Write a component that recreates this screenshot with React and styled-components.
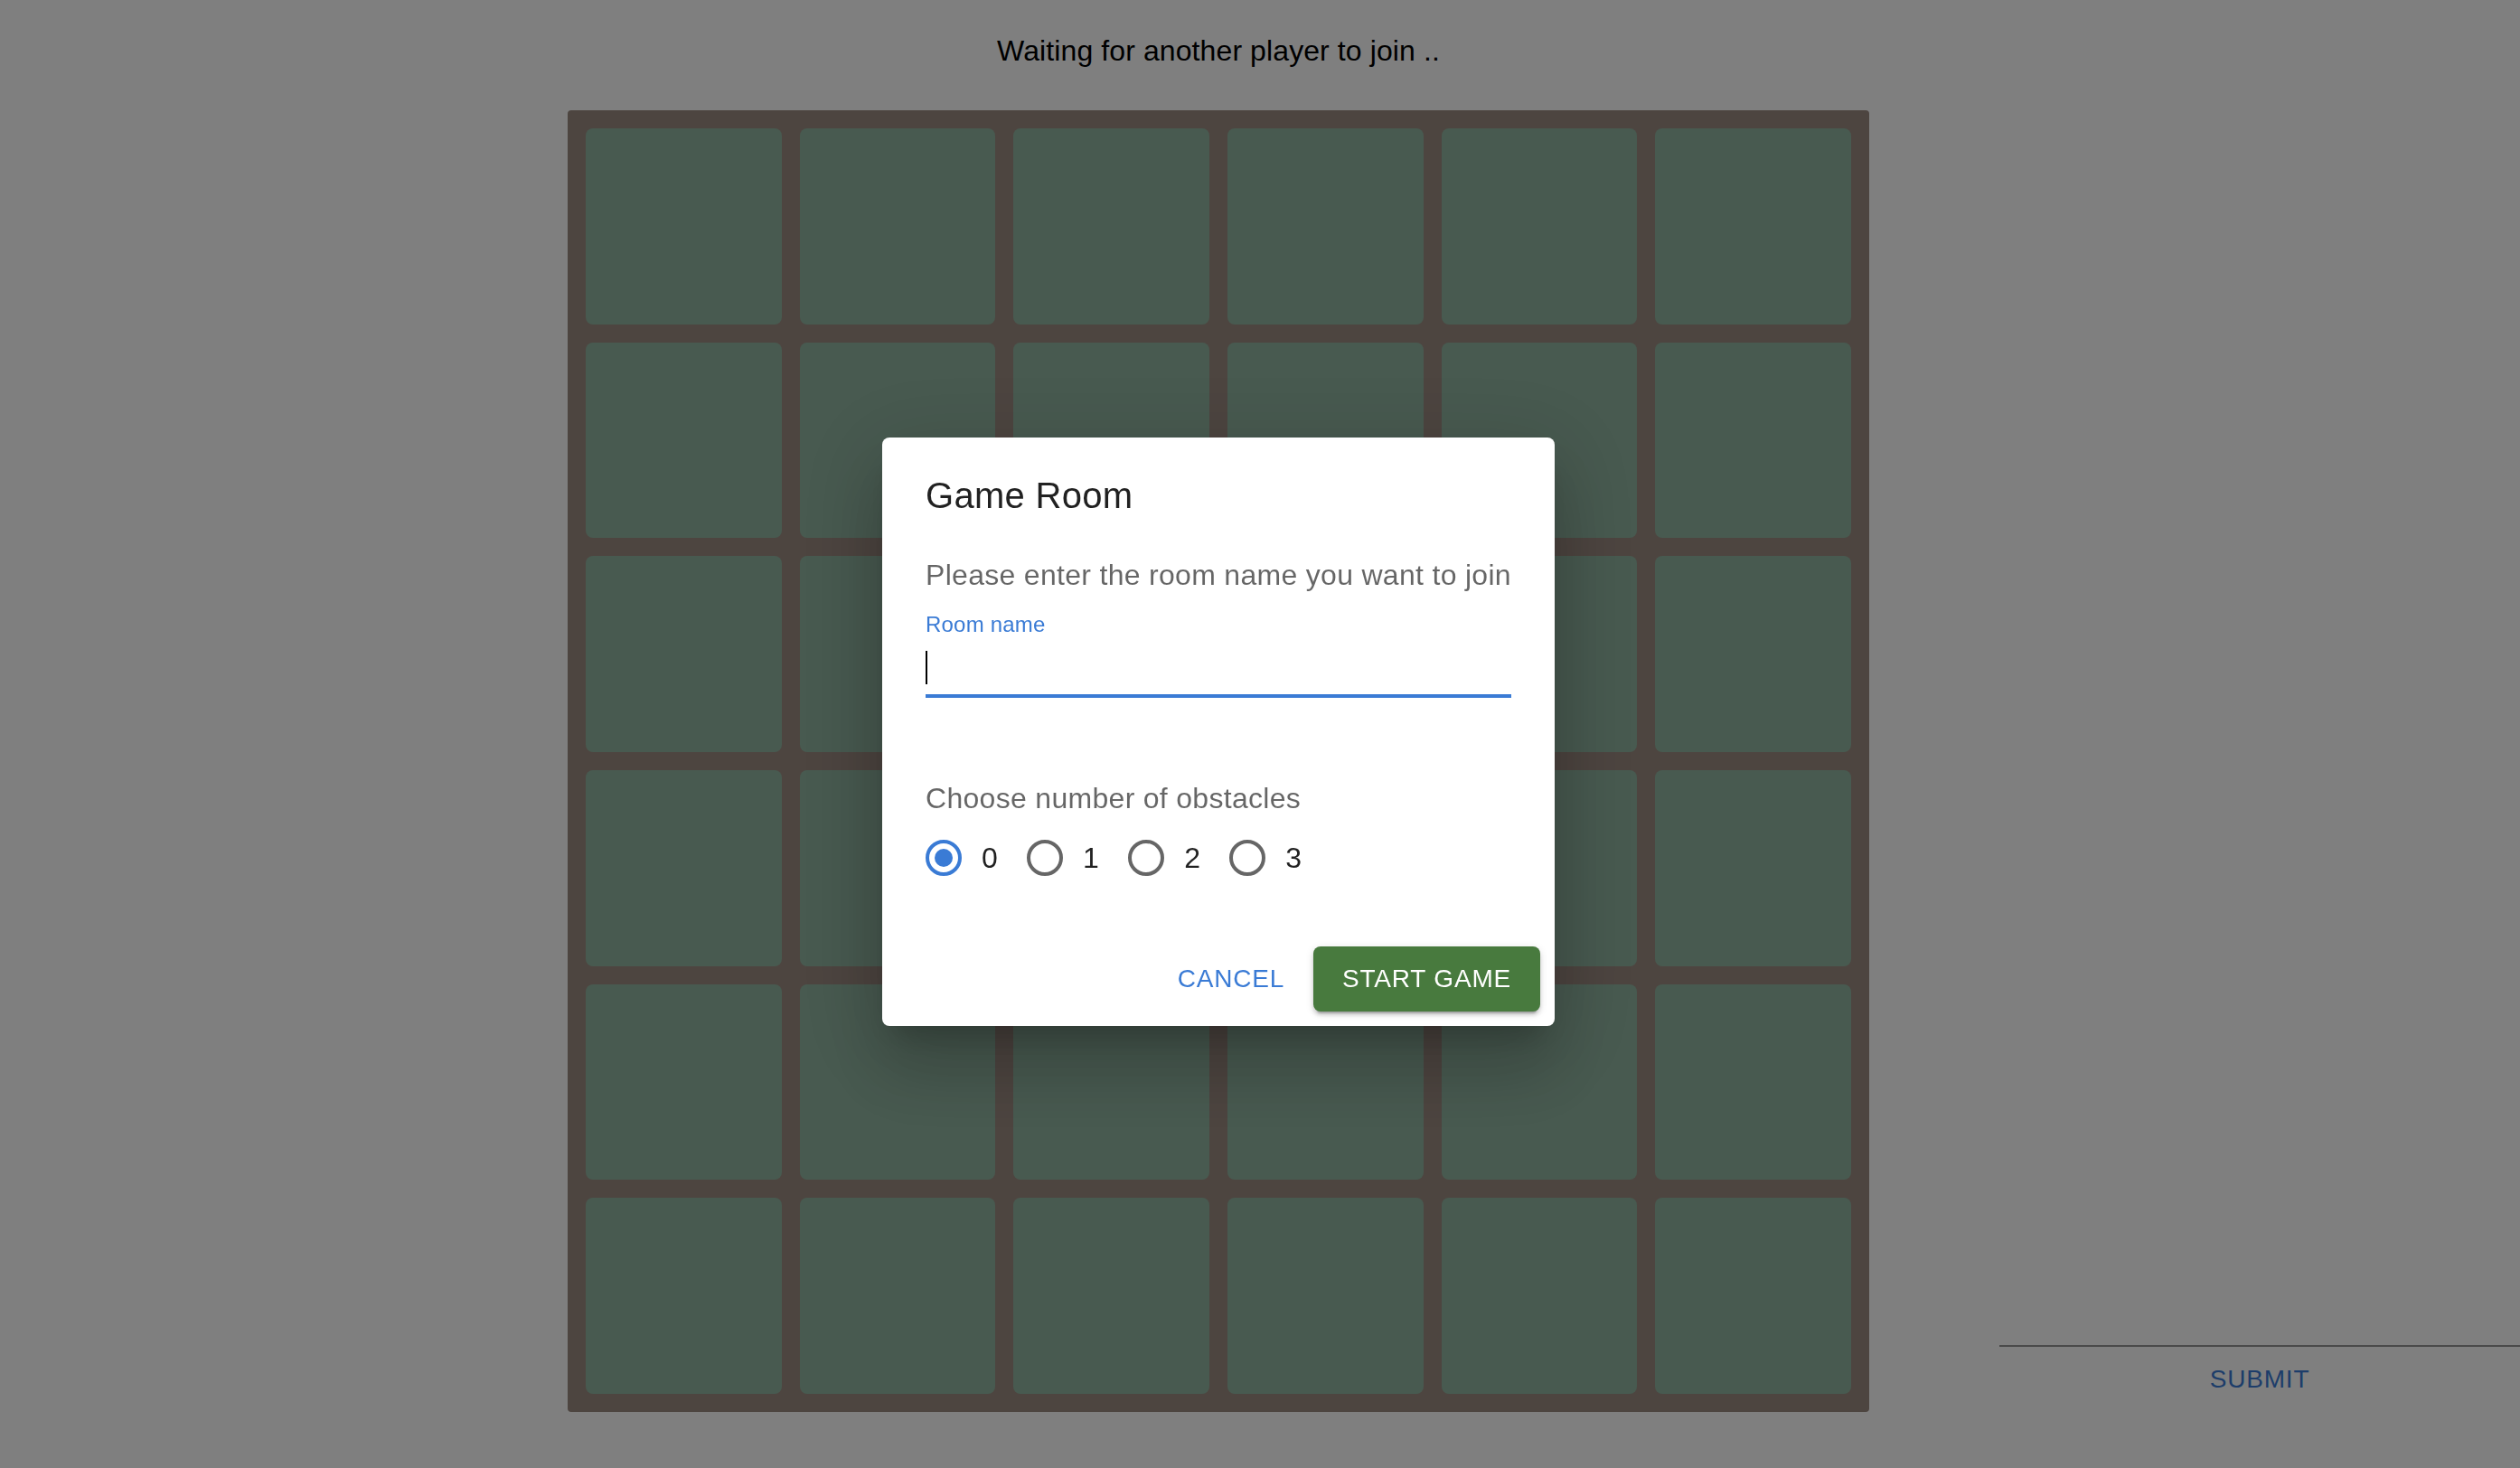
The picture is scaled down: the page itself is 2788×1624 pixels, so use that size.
import React from "react";
import styled, { createGlobalStyle } from "styled-components";

const BLUE = "#3a7bd5";
const GREEN = "#487a3e";

const GlobalStyle = createGlobalStyle`
  html, body {
    margin: 0;
    padding: 0;
    background: #fff;
  }
  body {
    font-family: "Liberation Sans", Arial, Helvetica, sans-serif;
  }
  * {
    box-sizing: border-box;
  }
`;

const obstacleOptions = [0, 1, 2, 3];
const cells = Array.from({ length: 36 }, (_, i) => i);

function RadioIcon({ checked }) {
  const color = checked ? BLUE : "rgba(0, 0, 0, 0.6)";
  return (
    <svg width="48" height="48" viewBox="0 0 24 24">
      <circle cx="12" cy="12" r="9" fill="none" stroke={color} strokeWidth="2" />
      {checked && <circle cx="12" cy="12" r="5" fill={color} />}
    </svg>
  );
}

function App() {
  return (
    <>
      <GlobalStyle />
      <Page>
        <Status>Waiting for another player to join ..</Status>
        <Board>
          {cells.map((i) => (
            <Cell key={i} />
          ))}
        </Board>
        <ChatPanel>
          <ChatInput />
          <TextButton>Submit</TextButton>
        </ChatPanel>
      </Page>

      <Backdrop>
        <Dialog>
          <DialogTitle>Game Room</DialogTitle>
          <DialogContent>
            <Prompt>Please enter the room name you want to join</Prompt>
            <FieldLabel>Room name</FieldLabel>
            <Field>
              <Caret />
            </Field>
            <Prompt $spaced>Choose number of obstacles</Prompt>
            <RadioRow>
              {obstacleOptions.map((n) => (
                <Option key={n}>
                  <RadioBox>
                    <RadioIcon checked={n === 0} />
                  </RadioBox>
                  <OptionLabel>{n}</OptionLabel>
                </Option>
              ))}
            </RadioRow>
          </DialogContent>
          <DialogActions>
            <TextButton>Cancel</TextButton>
            <ContainedButton>Start Game</ContainedButton>
          </DialogActions>
        </Dialog>
      </Backdrop>
    </>
  );
}

export default App;

const Page = styled.div`
  height: 100vh;
  display: grid;
  grid-template-columns: 1fr 576px;
  grid-template-rows: auto auto;
  align-content: start;
  padding-left: 484px;
`;

const Status = styled.div`
  grid-column: 1;
  justify-self: center;
  margin: 32px 0 42px;
  font-size: 32px;
  line-height: 48px;
  letter-spacing: 0.1px;
  color: #000;
`;

const Board = styled.div`
  grid-column: 1;
  justify-self: center;
  width: 1440px;
  height: 1440px;
  padding: 20px;
  border-radius: 4px;
  background: #9a8a80;
  display: grid;
  grid-template-columns: repeat(6, 1fr);
  grid-template-rows: repeat(6, 1fr);
  gap: 20px;
`;

const Cell = styled.div`
  background: #90b4a0;
  border-radius: 8px;
`;

const ChatPanel = styled.div`
  grid-column: 2;
  align-self: end;
  display: flex;
  flex-direction: column;
  align-items: center;
`;

const ChatInput = styled.div`
  width: 100%;
  height: 60px;
  border-bottom: 2px solid rgba(0, 0, 0, 0.42);
`;

const Backdrop = styled.div`
  position: fixed;
  inset: 0;
  background: rgba(0, 0, 0, 0.5);
  display: flex;
  align-items: center;
  justify-content: center;
  padding: 0 92px 5px 0;
`;

const Dialog = styled.div`
  width: 744px;
  background: #fff;
  border-radius: 8px;
  box-shadow: 0 22px 30px -14px rgba(0, 0, 0, 0.2),
    0 48px 76px 6px rgba(0, 0, 0, 0.14), 0 18px 92px 16px rgba(0, 0, 0, 0.12);
`;

const DialogTitle = styled.h2`
  margin: 0;
  padding: 32px 48px;
  font-size: 40px;
  line-height: 64px;
  font-weight: 400;
  letter-spacing: 0.3px;
  color: rgba(0, 0, 0, 0.87);
`;

const DialogContent = styled.div`
  padding: 0 48px 40px;
`;

const Prompt = styled.p`
  margin: ${(p) => (p.$spaced ? "87px" : "0")} 0 0;
  font-size: 32px;
  line-height: 48px;
  letter-spacing: 0.3px;
  color: rgba(0, 0, 0, 0.6);
`;

const FieldLabel = styled.div`
  margin-top: 19px;
  font-size: 24px;
  line-height: 24px;
  letter-spacing: 0.2px;
  color: ${BLUE};
`;

const Field = styled.div`
  margin-top: 9px;
  height: 60px;
  padding-top: 8px;
  border-bottom: 4px solid ${BLUE};
`;

const Caret = styled.div`
  width: 2px;
  height: 37px;
  background: #000;
`;

const RadioRow = styled.div`
  display: flex;
`;

const Option = styled.label`
  display: flex;
  align-items: center;
  margin: 0 32px 0 -22px;
`;

const RadioBox = styled.span`
  display: flex;
  padding: 18px;
`;

const OptionLabel = styled.span`
  font-size: 32px;
  line-height: 48px;
  letter-spacing: 0.3px;
  color: rgba(0, 0, 0, 0.87);
`;

const DialogActions = styled.div`
  display: flex;
  justify-content: flex-end;
  align-items: center;
  gap: 16px;
  padding: 16px;
`;

const BaseButton = styled.button`
  font-family: "Liberation Sans", Arial, Helvetica, sans-serif;
  font-size: 28px;
  line-height: 48px;
  letter-spacing: 0.8px;
  text-transform: uppercase;
  border: 0;
  border-radius: 8px;
  cursor: pointer;
`;

const TextButton = styled(BaseButton)`
  padding: 12px 16px;
  background: transparent;
  color: ${BLUE};
`;

const ContainedButton = styled(BaseButton)`
  padding: 12px 32px;
  background: ${GREEN};
  color: #fff;
  box-shadow: 0 6px 2px -4px rgba(0, 0, 0, 0.2), 0 4px 4px 0 rgba(0, 0, 0, 0.14),
    0 2px 10px 0 rgba(0, 0, 0, 0.12);
`;
